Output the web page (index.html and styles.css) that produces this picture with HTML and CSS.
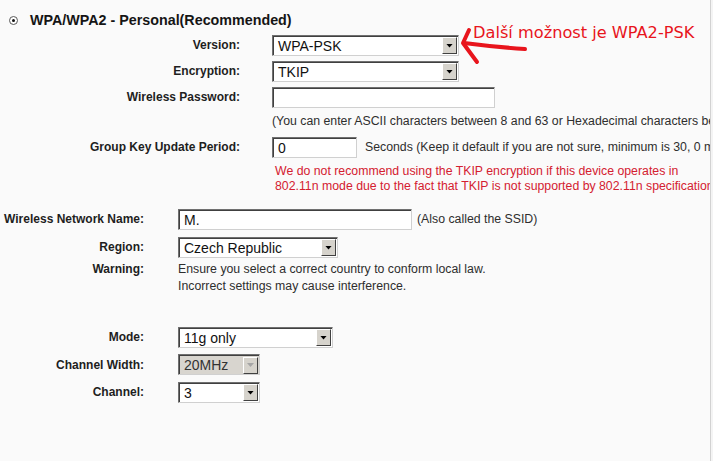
FILE: index.html
```html
<!DOCTYPE html>
<html>
<head>
<meta charset="utf-8">
<link rel="stylesheet" href="styles.css">
</head>
<body>
<div class="page">
  <div class="annot">
    <svg class="arrow" width="80" height="45" viewBox="0 0 80 45">
      <path d="M14 6 L8 19 L22 38" fill="none" stroke="#e8141c" stroke-width="4" stroke-linecap="round" stroke-linejoin="round"/>
      <path d="M9 19 Q40 23 70 25" fill="none" stroke="#e8141c" stroke-width="4" stroke-linecap="round"/>
    </svg>
    <span class="annot-text">Další možnost je WPA2-PSK</span>
  </div>

  <section class="sec sec1">
    <div class="heading"><span class="radio"></span><span class="htext">WPA/WPA2 - Personal(Recommended)</span></div>
    <div class="row r26">
      <div class="lbl">Version:</div>
      <div class="fld"><div class="sel w187"><span class="val">WPA-PSK</span><span class="btn"></span></div></div>
    </div>
    <div class="row r26">
      <div class="lbl">Encryption:</div>
      <div class="fld"><div class="sel w187"><span class="val">TKIP</span><span class="btn"></span></div></div>
    </div>
    <div class="row r26">
      <div class="lbl">Wireless Password:</div>
      <div class="fld"><div class="inp w223"></div></div>
    </div>
    <div class="row r22">
      <div class="lbl"></div>
      <div class="fld txt">(You can enter ASCII characters between 8 and 63 or Hexadecimal characters between 8 and 64.)</div>
    </div>
    <div class="row r30">
      <div class="lbl">Group Key Update Period:</div>
      <div class="fld fld-inline"><div class="inp w85"><span class="val">0</span></div><span class="txt after">Seconds (Keep it default if you are not sure, minimum is 30, 0 means no update)</span></div>
    </div>
    <div class="row msg-row">
      <div class="lbl"></div>
      <div class="fld msg">We do not recommend using the TKIP encryption if this device operates in<br>802.11n mode due to the fact that TKIP is not supported by 802.11n specification.</div>
    </div>
  </section>

  <section class="sec sec2">
    <div class="row r28">
      <div class="lbl">Wireless Network Name:</div>
      <div class="fld fld-inline"><div class="inp w234"><span class="val">M.</span></div><span class="txt after2">(Also called the SSID)</span></div>
    </div>
    <div class="row r28">
      <div class="lbl">Region:</div>
      <div class="fld"><div class="sel w159"><span class="val">Czech Republic</span><span class="btn"></span></div></div>
    </div>
    <div class="row warn-row">
      <div class="lbl">Warning:</div>
      <div class="fld txt warn">Ensure you select a correct country to conform local law.<br>Incorrect settings may cause interference.</div>
    </div>
    <div class="row r28 mode-row">
      <div class="lbl">Mode:</div>
      <div class="fld"><div class="sel w155"><span class="val">11g only</span><span class="btn"></span></div></div>
    </div>
    <div class="row r27">
      <div class="lbl">Channel Width:</div>
      <div class="fld"><div class="sel w82 disabled"><span class="val">20MHz</span><span class="btn"></span></div></div>
    </div>
    <div class="row r28">
      <div class="lbl">Channel:</div>
      <div class="fld"><div class="sel w82"><span class="val">3</span><span class="btn"></span></div></div>
    </div>
  </section>
</div>
</body>
</html>
```

FILE: styles.css
```css
html, body {
  margin: 0;
  padding: 0;
  background: #f4f4f4;
}
.page {
  position: relative;
  width: 710px;
  height: 461px;
  background: #fafafa;
  border-right: 1px solid #d2d2d2;
  overflow: hidden;
  font-family: "Liberation Sans", Arial, sans-serif;
  color: #1c1c1c;
}
.sec {
  display: flex;
  flex-direction: column;
}
.heading {
  display: flex;
  align-items: center;
  height: 20px;
  margin-top: 10px;
}
.radio {
  width: 7px;
  height: 7px;
  margin-left: 9px;
  margin-top: 1px;
  border-radius: 50%;
  border: 1px solid #5a5a5a;
  background: #fff;
  display: flex;
  align-items: center;
  justify-content: center;
}
.radio::after {
  content: "";
  width: 3px;
  height: 3px;
  border-radius: 50%;
  background: #111;
}
.htext {
  margin-left: 12px;
  font-weight: bold;
  font-size: 14.3px;
  color: #151515;
}
.row {
  display: flex;
  align-items: center;
  white-space: nowrap;
}
.r22 { height: 22px; }
.r26 { height: 26px; }
.r27 { height: 27px; }
.r28 { height: 28px; }
.r30 { height: 30px; }
.sec1 .heading + .row { margin-top: 2px; }
.lbl {
  flex: none;
  display: flex;
  justify-content: flex-end;
  font-weight: bold;
  font-size: 12px;
  color: #1e1e1e;
}
.sec1 .lbl { width: 240px; }
.sec1 .fld { margin-left: 32px; }
.sec2 .lbl { width: 144px; }
.sec2 .fld { margin-left: 34px; }
.fld-inline {
  display: flex;
  align-items: center;
}
.txt {
  font-size: 12.3px;
  color: #2e2e2e;
}
.after { margin-left: 8px; }
.after2 { margin-left: 5px; }
.msg-row {
  margin-top: 2px;
  align-items: flex-start;
}
.msg {
  font-size: 12.3px;
  line-height: 15px;
  color: #d42030;
}
.sec1 .msg { margin-left: 35px; }
.sec2 { margin-top: 11px; }
.warn-row {
  align-items: flex-start;
}
.warn-row .lbl { line-height: 17px; }
.warn { line-height: 17px; }
.mode-row { margin-top: 28px; }

.sel, .inp {
  box-sizing: border-box;
  height: 21px;
  display: flex;
  align-items: center;
  background: #fff;
  border: 1px solid;
  border-color: #707070 #d0d0d0 #d0d0d0 #707070;
  box-shadow: inset 1px 1px 0 #404040;
  font-size: 14px;
  color: #111;
}
.val {
  flex: 1;
  padding-left: 5px;
  padding-top: 1px;
}
.btn {
  flex: none;
  box-sizing: border-box;
  width: 15px;
  height: 17px;
  margin-right: 1px;
  margin-top: 1px;
  background: #d6d3cc;
  border: 1px solid;
  border-color: #ffffff #404040 #404040 #ffffff;
  display: flex;
  align-items: center;
  justify-content: center;
}
.btn::after {
  content: "";
  width: 7px;
  height: 4px;
  background: #000;
  clip-path: polygon(0 0, 100% 0, 50% 100%);
}
.sel.disabled {
  background: #d8d5cf;
  color: #333;
}
.sel.disabled .btn::after { background: #a5a5a5; }
.w187 { width: 187px; }
.w223 { width: 223px; }
.w85 { width: 85px; }
.w234 { width: 234px; }
.w159 { width: 160px; }
.w155 { width: 155px; }
.w82 { width: 82px; }

.annot {
  position: absolute;
  left: 455px;
  top: 24px;
}
.arrow {
  position: absolute;
  left: 0;
  top: 0;
}
.annot-text {
  position: absolute;
  left: 18px;
  top: -1px;
  white-space: nowrap;
  font-family: "DejaVu Sans", Verdana, sans-serif;
  font-size: 16.2px;
  line-height: 20px;
  color: #e8141c;
}
```
